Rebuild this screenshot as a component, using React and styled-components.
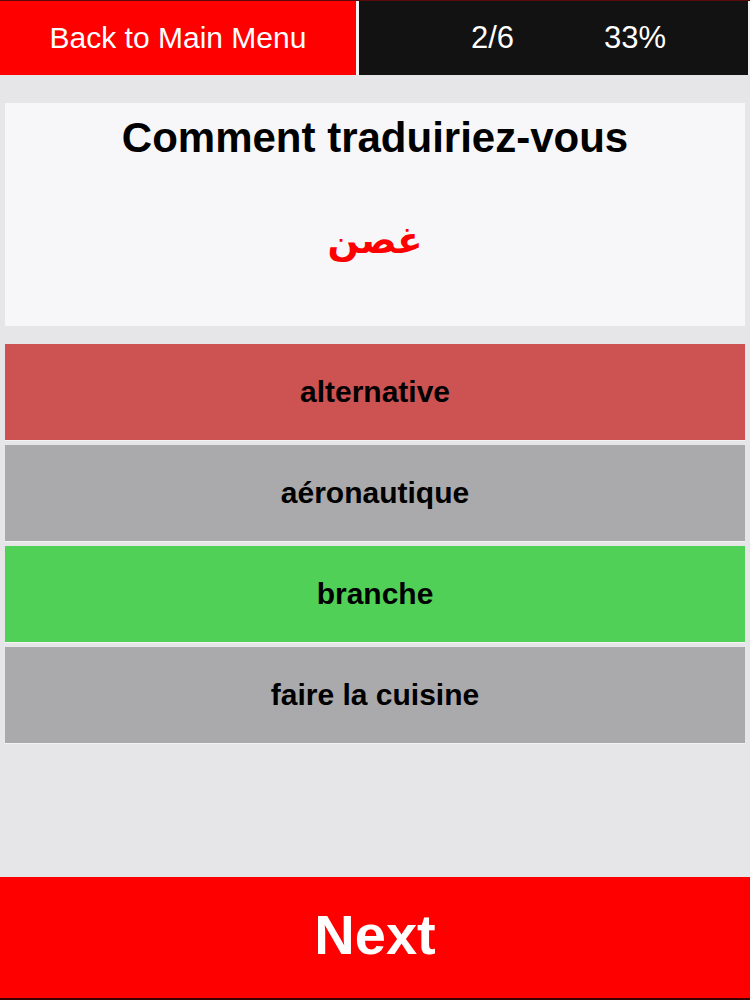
import React from "react";
import styled, { createGlobalStyle } from "styled-components";

const Global = createGlobalStyle`
  html, body { margin: 0; padding: 0; }
  body {
    background: #e6e6e8;
    font-family: "Liberation Sans", Arial, Helvetica, sans-serif;
  }
`;

const Screen = styled.div`
  width: 750px;
  height: 1000px;
  display: flex;
  flex-direction: column;
  background: #e6e6e8;
  overflow: hidden;
`;

const TopBar = styled.div`
  height: 75px;
  display: flex;
  background: #f4f2f2;
  border-top: 1px solid #5a0a0a;
  box-sizing: border-box;
  gap: 3px;
  padding-right: 2px;
`;

const BackButton = styled.button`
  width: 356px;
  border: none;
  margin: 0;
  padding: 0;
  background: #ff0000;
  color: #ffffff;
  font-family: "Liberation Sans", Arial, sans-serif;
  font-size: 30px;
  display: flex;
  align-items: center;
  justify-content: center;
`;

const Stats = styled.div`
  flex: 1;
  background: #121212;
  color: #ffffff;
  font-size: 31px;
  display: flex;
  align-items: center;
  padding-left: 112px;
  gap: 90px;
`;

const Stat = styled.span``;

const QuestionCard = styled.div`
  margin: 28px 5px 0;
  height: 223px;
  background: #f7f6f8;
  display: flex;
  flex-direction: column;
  align-items: center;
  box-sizing: border-box;
  padding-top: 14px;
`;

const Prompt = styled.div`
  font-size: 42px;
  line-height: 42px;
  font-weight: bold;
  color: #000;
`;

const Word = styled.div`
  margin-top: 58px;
  font-family: "DejaVu Sans", sans-serif;
  font-size: 37px;
  font-weight: bold;
  line-height: 48px;
  color: #ff0000;
  direction: rtl;
`;

const Options = styled.div`
  margin: 18px 5px 0;
  display: flex;
  flex-direction: column;
  gap: 5px;
`;

const Option = styled.button`
  height: 96px;
  border: none;
  margin: 0;
  padding: 0;
  background: ${(p) => p.$bg};
  color: #000;
  font-family: "Liberation Sans", Arial, sans-serif;
  font-size: 30px;
  font-weight: bold;
  display: flex;
  align-items: center;
  justify-content: center;
  box-shadow: 0 1px 0 #f4f2f2;
`;

const Spacer = styled.div`
  flex: 1;
`;

const NextButton = styled.button`
  height: 123px;
  border: none;
  margin: 0;
  padding: 0 0 6px;
  background: #ff0000;
  color: #ffffff;
  font-family: "Liberation Sans", Arial, sans-serif;
  font-size: 56px;
  line-height: 56px;
  font-weight: bold;
  display: flex;
  align-items: center;
  justify-content: center;
  border-bottom: 2px solid #3a0000;
  box-sizing: border-box;
`;

const COLORS = {
  wrong: "#cd5252",
  neutral: "#aaa9ab",
  right: "#50d056",
};

const answers = [
  { text: "alternative", state: "wrong" },
  { text: "aéronautique", state: "neutral" },
  { text: "branche", state: "right" },
  { text: "faire la cuisine", state: "neutral" },
];

export default function App() {
  return (
    <>
      <Global />
      <Screen>
        <TopBar>
          <BackButton>Back to Main Menu</BackButton>
          <Stats>
            <Stat>2/6</Stat>
            <Stat>33%</Stat>
          </Stats>
        </TopBar>
        <QuestionCard>
          <Prompt>Comment traduiriez-vous</Prompt>
          <Word>غصن</Word>
        </QuestionCard>
        <Options>
          {answers.map((a) => (
            <Option key={a.text} $bg={COLORS[a.state]}>
              {a.text}
            </Option>
          ))}
        </Options>
        <Spacer />
        <NextButton>Next</NextButton>
      </Screen>
    </>
  );
}
